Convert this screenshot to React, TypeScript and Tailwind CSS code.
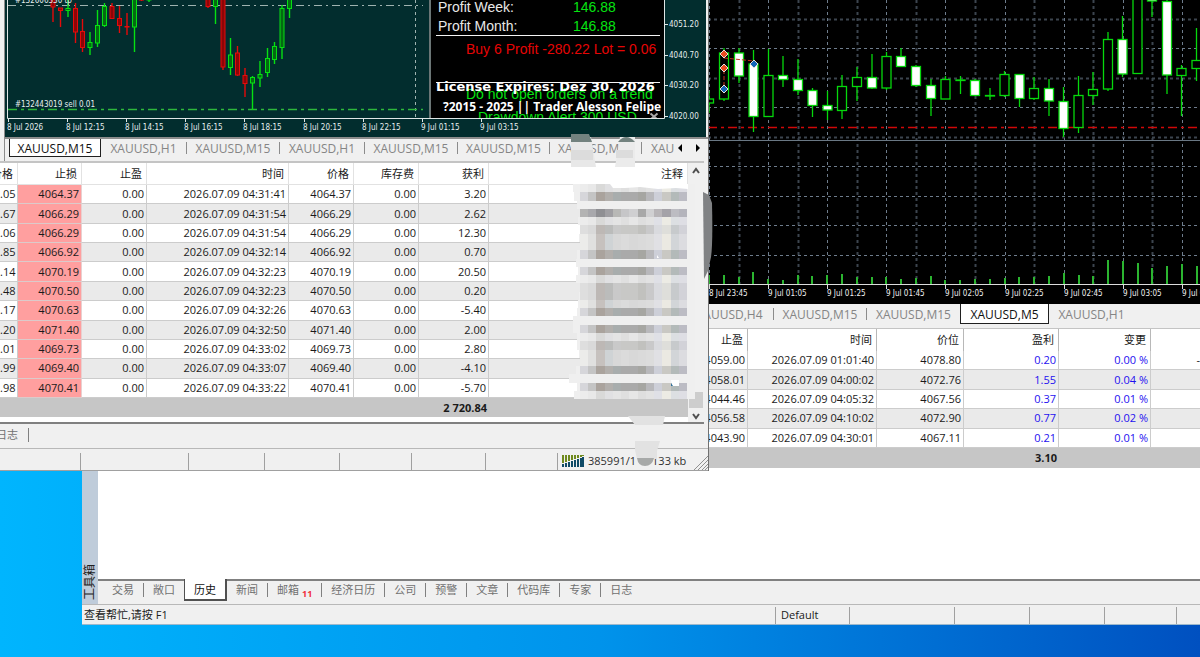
import React from "react";

type Candle = [x: number, high: number, low: number, top: number, bottom: number, up: boolean];

const leftCandles: Candle[] = [
  [53, -5, 22, -5, 7, false],
  [60.5, 8, 27, 8, 10.5, false],
  [68, -2, 17, 8.5, 10.5, true],
  [75.5, 3, 43, 8.5, 32, false],
  [82.5, 19, 52, 31.5, 47.5, false],
  [90, 32, 55, 42.5, 47.5, true],
  [97.5, 10, 47, 25.5, 43, true],
  [104.5, 3, 27, 6.5, 25.5, true],
  [112, 3, 19, 6.5, 18.5, false],
  [119.5, 6, 33, 18.5, 25.5, false],
  [127, 13, 35, 26.5, 27, false],
  [134.5, -5, 52, -5, 27, true],
  [141.5, -5, 1, -5, 0, false],
  [149, -5, 2, -5, 0, true],
  [208, -5, 8, -5, 6.5, false],
  [215.5, -5, 24, -5, 6.5, true],
  [223, -5, 70, -5, 67, false],
  [230.5, 38, 75, 55, 67.5, true],
  [237.5, 46, 76, 53, 75, false],
  [245, 68, 97, 75.5, 83.5, false],
  [252.5, 76, 110, 77.5, 83, true],
  [260, 61, 87, 74.5, 78, true],
  [267.5, 48, 77, 58.5, 72.5, true],
  [274.5, 42, 64, 46.5, 59.5, true],
  [282, 5, 59, 8.5, 47.5, true],
  [289.5, -5, 18, -5, 8.5, true],
];

// `up` candles are hollow, the others are filled white.
const rightCandles: Candle[] = [
  [709, 91, 113, 99, 103, true],
  [724, 48, 101, 53, 99, true],
  [739, 48, 83, 53, 76, false],
  [753.5, 50, 132, 64, 116.5, false],
  [768.5, 49, 117, 75.5, 116.5, true],
  [783, 56, 87, 75.5, 79.5, false],
  [798, 59, 95, 79.5, 90.5, false],
  [812.5, 88, 117, 90.5, 105.5, false],
  [827.5, 91, 120, 105.5, 110, false],
  [842, 75, 119, 86.5, 110.5, true],
  [857, 67, 101, 77.5, 86.5, true],
  [872, 54, 89, 77.5, 88, false],
  [886.5, 52, 90, 56.5, 88, true],
  [901, 48, 67, 56.5, 66.5, false],
  [916, 65, 87, 66.5, 85.5, false],
  [931, 79, 116, 85.5, 98.5, false],
  [945.5, 76, 99, 79.5, 99, true],
  [960.5, 76, 94, 80, 80.5, true],
  [975, 79, 96, 80.5, 95.5, false],
  [990, 88, 100, 95.5, 96, true],
  [1004.5, 71, 97, 74.5, 95.5, true],
  [1019.5, 74, 107, 74.5, 98.5, false],
  [1034, 77, 100, 88.5, 98.5, true],
  [1049, 79, 116, 88.5, 101, false],
  [1063.5, 87, 137, 101.5, 128.5, false],
  [1078.5, 76, 133, 95.5, 127.5, true],
  [1093, 72, 105, 89.5, 95.5, true],
  [1108, 32, 91, 39.5, 89, true],
  [1122.5, 16, 77, 39.5, 74, false],
  [1137.5, -5, 74, -5, 73.5, true],
  [1152, -5, 17, -5, 1, false],
  [1167, -5, 94, 1.5, 75, false],
  [1181.5, 65, 116, 68.5, 75.5, true],
  [1196.5, 28, 81, 60.5, 68.5, true],
];

const volumes = [
  9, 9, 7, 12, 5, 4, 9, 8, 9, 10, 7, 7, 7, 5, 6, 8, 4, 4, 5, 5, 6, 7, 7, 8, 11, 9, 8, 24, 23, 21, 16, 18, 20, 18,
];

const leftTimes = ["8 Jul 2026", "8 Jul 12:15", "8 Jul 14:15", "8 Jul 16:15", "8 Jul 18:15", "8 Jul 20:15", "8 Jul 22:15", "9 Jul 01:15", "9 Jul 03:15"];
const rightTimes = ["8 Jul 23:45", "9 Jul 01:05", "9 Jul 01:25", "9 Jul 01:45", "9 Jul 02:05", "9 Jul 02:25", "9 Jul 02:45", "9 Jul 03:05", "9 Jul 03:25"];
const prices = ["4051.20", "4040.70", "4030.20", "4020.00"];

const leftRows = [
  [".05", "4064.37", "0.00", "2026.07.09 04:31:41", "4064.37", "0.00", "3.20"],
  [".67", "4066.29", "0.00", "2026.07.09 04:31:54", "4066.29", "0.00", "2.62"],
  [".06", "4066.29", "0.00", "2026.07.09 04:31:54", "4066.29", "0.00", "12.30"],
  [".85", "4066.92", "0.00", "2026.07.09 04:32:14", "4066.92", "0.00", "0.70"],
  [".14", "4070.19", "0.00", "2026.07.09 04:32:23", "4070.19", "0.00", "20.50"],
  [".48", "4070.50", "0.00", "2026.07.09 04:32:23", "4070.50", "0.00", "0.20"],
  [".17", "4070.63", "0.00", "2026.07.09 04:32:26", "4070.63", "0.00", "-5.40"],
  [".20", "4071.40", "0.00", "2026.07.09 04:32:50", "4071.40", "0.00", "2.00"],
  [".01", "4069.73", "0.00", "2026.07.09 04:33:02", "4069.73", "0.00", "2.80"],
  [".99", "4069.40", "0.00", "2026.07.09 04:33:07", "4069.40", "0.00", "-4.10"],
  [".98", "4070.41", "0.00", "2026.07.09 04:33:22", "4070.41", "0.00", "-5.70"],
];

const rightRows = [
  ["4059.00", "2026.07.09 01:01:40", "4078.80", "0.20", "0.00 %"],
  ["4058.01", "2026.07.09 04:00:02", "4072.76", "1.55", "0.04 %"],
  ["4044.46", "2026.07.09 04:05:32", "4067.56", "0.37", "0.01 %"],
  ["4056.58", "2026.07.09 04:10:02", "4072.90", "0.77", "0.02 %"],
  ["4043.90", "2026.07.09 04:30:01", "4067.11", "0.21", "0.01 %"],
];

const axisFont = "text-[8px] font-['DejaVu_Sans_Condensed','DejaVu_Sans',sans-serif]";

function AccountChart() {
  return (
    <svg className="block h-[137px] w-full bg-[#022d2e]" role="img" aria-label="XAUUSD,M15">
      <rect x="0" y="0" width="4" height="137" fill="#f0f0f0" />
      <rect x="4" y="0" width="1" height="137" fill="#8c8c8c" />
      <g stroke="#9fb3b0" fill="none">
        <path d="M8 5.5H423" strokeDasharray="8 4 2 4" />
        <path d="M415.5 0V118" strokeDasharray="3 3" />
      </g>
      <path d="M8 109.5H423" stroke="#2fb83c" strokeWidth="1.4" strokeDasharray="9 4 3 4" />
      {leftCandles.map(([x, high, low, top, bottom, up]) => (
        <g key={x} stroke={up ? "#06e012" : "#e60a0a"}>
          <path d={`M${x} ${high}V${low}`} strokeWidth="1.4" />
          <rect x={x - 2} y={top} width="4" height={bottom - top} fill={up ? "#046a12" : "#8c0507"} />
        </g>
      ))}
      <rect x="429" y="0" width="2" height="118" fill="#6b7676" />
      <rect x="431" y="0" width="233" height="118" fill="#000" />
      <svg x="0" y="0" width="664" height="118">
        <g fill="#e8e8e8" className="text-[14px] font-['Liberation_Sans',sans-serif]">
          <text x="438" y="12">Profit Week:</text>
          <text x="438" y="31">Profit Month:</text>
          <g fill="#06e312">
            <text x="573" y="12">146.88</text>
            <text x="573" y="31">146.88</text>
            <text x="466" y="99">Do not open orders on a trend</text>
            <text x="478" y="122">Drawdown Alert 300 USD</text>
          </g>
          <text x="466" y="54" fill="#e60505">Buy 6 Profit -280.22 Lot = 0.06</text>
        </g>
        <path d="M436 35.5H660M436 82.5H660" stroke="#f4f4f4" />
        <g fill="#fff" className="font-bold">
          <text x="436" y="91" className="text-[13px] font-['DejaVu_Sans',sans-serif]">License Expires: Dez 30, 2026</text>
          <text x="443" y="111" className="text-xs font-['Open_Sans',sans-serif]">?2015 - 2025 || Trader Alesson Felipe</text>
        </g>
        <path d="M650.5 113.5l7 6M657.5 113.5l-7 6" stroke="#a8a8a8" strokeWidth="2" />
      </svg>
      <path d="M7.5 0V118.5H664.5V0" fill="none" stroke="#dfe6e6" />
      <g fill="#e6eeee" className={axisFont}>
        <text x="15" y="3">#132606330 tp</text>
        <text x="15" y="107">#132443019 sell 0.01</text>
        {prices.map((price, i) => (
          <g key={price}>
            <path d={`M665 ${24.5 + Math.round(i * 30.5)}h3`} stroke="#dfe6e6" />
            <text x="669" y={27 + Math.round(i * 30.5)}>{price}</text>
          </g>
        ))}
        {leftTimes.map((time, i) => (
          <g key={time}>
            <path d={`M${8.5 + Math.round(i * 59.1)} 119v3`} stroke="#dfe6e6" />
            <text x={7 + Math.round(i * 59.1)} y="130">{time}</text>
          </g>
        ))}
      </g>
    </svg>
  );
}

function Marker({ x, y, color }: { x: number; y: number; color: string }) {
  return <path d={`M${x} ${y - 4}l4 4l-4 4l-4 -4z`} fill={color} stroke="#e8ddd8" strokeWidth="1" />;
}

function MarketChart() {
  const columns = Array.from({ length: 17 }, (_, i) => Math.round(709 + i * 29.56));
  const lines = [19, 48, 78, 107, 137, 166, 196, 225, 255];
  return (
    <svg className="block h-[304px] w-full bg-black" role="img" aria-label="XAUUSD,M5">
      <g transform="translate(-82 0)">
        {lines.map((y, i) => (
          <path
            key={y}
            d={`M708 ${y + 0.5}H1200`}
            stroke={i % 2 || i > 5 ? "#6e7c8c" : "#3c454f"}
            strokeWidth={i % 2 || i > 5 ? 1 : 2}
            strokeDasharray="3 3"
          />
        ))}
        {columns.map((x, i) => (
          <path
            key={x}
            d={`M${x + 0.5} 0V284`}
            stroke={i % 2 ? "#3c454f" : "#6e7c8c"}
            strokeWidth={i % 2 ? 2 : 1}
            strokeDasharray="3 3"
          />
        ))}
        <path d="M708 127.5H1200" stroke="#d00808" strokeWidth="1.4" strokeDasharray="9 4 3 4" />
        <path d="M708 140.5H1200" stroke="#6a7884" />
        {rightCandles.map(([x, high, low, top, bottom, up]) => (
          <g key={x} stroke="#06d80c">
            <path d={`M${x} ${high}V${low}`} strokeWidth="1.3" />
            <rect x={x - 4.5} y={top} width="9" height={bottom - top} fill={up ? "#000" : "#fff"} strokeWidth="1.3" />
          </g>
        ))}
        <path d="M724 58L754 61M724 70V88" stroke="#c2341c" strokeDasharray="4 2" />
        <Marker x={724} y={54} color="#ea4a1f" />
        <Marker x={724} y={68} color="#ea4a1f" />
        <Marker x={724} y={89} color="#1565b8" />
        <Marker x={754} y={64} color="#1565b8" />
        {volumes.map((height, i) => (
          <rect key={i} x={Math.round(708 + i * 14.78)} y={284 - height} width="2" height={height} fill="#2bb530" />
        ))}
        <path d="M708 284.5H1200" stroke="#dcdcdc" />
        <g fill="#f0f0f0" className={axisFont}>
          {rightTimes.map((time, i) => (
            <g key={time}>
              <path d={`M${709.5 + Math.round(i * 59.1)} 285v4`} stroke="#dcdcdc" />
              <text x={709 + Math.round(i * 59.1)} y="296">{time}</text>
            </g>
          ))}
        </g>
      </g>
    </svg>
  );
}

const darkA = ["#d6d6da", "#c4c4c4", "#aaa39d", "#b2afac", "#a8adad", "#aaaaaa", "#aaaaaa", "#a6a6a2", "#b8b8bb", "#cdcfd8", "#c9c8c3", "#b3bab9", "#bcbcc4"];
const darkB = ["#b3b3b3", "#a8a8ac", "#8f8f93", "#a09fa3", "#b8b8b6", "#c6c6c8", "#cfcfd1", "#a8a8a8", "#d0d0d2", "#b8b5b8", "#a4a2a8", "#bcbcc2", "#b4b4bc"];
const midA = ["#dedede", "#d9d9d9", "#bdb8b5", "#bbbcbb", "#c9c9c9", "#c8c8c6", "#c8c8c6", "#c1c1be", "#c9c9ca", "#d9dade", "#dededa", "#c7cacc", "#d2d2d8"];
const midB = ["#ececea", "#e0e0df", "#c6c1be", "#cfd3d5", "#d8d8d8", "#dbdbdb", "#d8d8d8", "#dadada", "#dcdcdc", "#e0e0e4", "#ebe9e2", "#d2d5d8", "#dcdce0"];
const paleA = ["#ececec", "#e8e8e8", "#d9d9d8", "#e0e0e2", "#e4e4e4", "#dfdfdf", "#e6e6e6", "#dedede", "#e2e2e2", "#dfe0e6", "#ecebe4", "#dcdfe2", "#dedee4"];
const plain = Array<string>(13).fill("#efefef");

const mosaic = [
  paleA, darkA, plain, darkB, paleA, midA, midB, midB, darkA, plain, darkA, paleA, midA,
  midA, midB, darkA, plain, darkA, paleA, midA, midB, midB, darkA, plain, darkA, paleA,
];
const edges = [573, 574, 577, 580, 578, 580, 579, 580, 577, 576, 578, 576, 580, 579, 578, 577, 573, 573, 577, 577, 579, 580, 576, 569, 577, 574];

function Redaction() {
  return (
    <svg className="pointer-events-none absolute top-0 left-0 h-[471px] w-[720px]" aria-hidden="true">
      {mosaic.map((colors, row) => {
        const y = Math.round(184 + row * 8.28);
        const height = Math.round(184 + (row + 1) * 8.28) - y;
        return (
          <g key={row}>
            <rect x={edges[row]} y={y} width={695 - edges[row]} height={height} fill="#efefef" />
            {colors.map((color, i) => {
              const x = Math.round(580 + i * 8.23);
              return <rect key={i} x={x} y={y} width={Math.round(580 + (i + 1) * 8.23) - x} height={height} fill={color} />;
            })}
          </g>
        );
      })}
      <path d="M610 184l3 4h12l15 -1l18 2l18 -1l12 1v-5z" fill="#fff" />
      <path d="M657 255l2 3h-2zM671 380h8v6h-7z" fill="#fff" />
      <path d="M671 383l2 3h-2z" fill="#2f6f9a" />
      <path d="M571 137h20l5 30h-25z" fill="#e8e8e8" />
      <path d="M571 134h18l3 8h-21z" fill="#73827f" />
      <path d="M620 137h15v30h-20z" fill="#ebebeb" />
      <path d="M618 142q8 -10 17 0z" fill="#73827f" />
      <path d="M571 150h22v10h-22zM616 150h17v8h-17z" fill="#dcdcdc" />
      <path d="M703 192l6 3l3 8q1 40 -1 54l-3 14l-4 8z" fill="#808284" />
      <path d="M628 416h37l-2 9h-28z" fill="#e2e2e2" />
      <path d="M635 441h25l-3 10v8h-20l-2 -9z" fill="#e2e2e2" />
      <path d="M637 458h17q-2 8 -9 8q-7 0 -8 -8z" fill="#a7a9a8" />
    </svg>
  );
}

function ChartTab({ label, className = "", active = false }: { label: string; className?: string; active?: boolean }) {
  return (
    <button
      type="button"
      className={`h-full shrink-0 overflow-hidden whitespace-nowrap pt-0.5 text-xs leading-4 ${active ? "border border-t-0 border-[#202020] bg-white text-[#111]" : "text-[#858585]"} ${className}`}
    >
      {label}
    </button>
  );
}

const Divider = () => <span className="h-3 w-px shrink-0 bg-[#8c8c8c]" />;

const leftHead = ["价格", "止损", "止盈", "时间", "价格", "库存费", "获利", "注释"];
const rightHead = ["止盈", "时间", "价位", "盈利", "变更"];

function AccountWindow() {
  return (
    <section className="absolute top-0 left-0 w-[709px] border-r border-[#707070] bg-[#f0f0f0]">
      <div className="pr-0.5">
        <AccountChart />
      </div>
      <nav className="ml-1 flex h-6 items-start border-t-2 border-l border-[#8c8c8c] pr-1 pb-1 pl-1">
        <ChartTab label="XAUUSD,M15" active className="w-[92px]" />
        <div className="flex h-full items-center">
          <ChartTab label="XAUUSD,H1" className="w-[85px]" />
          <Divider />
          <ChartTab label="XAUUSD,M15" className="w-[92px]" />
          <Divider />
          <ChartTab label="XAUUSD,H1" className="w-[84px]" />
          <Divider />
          <ChartTab label="XAUUSD,M15" className="w-[92px]" />
          <Divider />
          <ChartTab label="XAUUSD,M15" className="w-[91px]" />
          <Divider />
          <ChartTab label="XAUUSD,M15" className="w-[91px]" />
          <Divider />
          <ChartTab label="XAUUSD,M15" className="w-[32px] pl-[9px]" />
        </div>
        <div className="flex h-full flex-1 items-center justify-between px-0.5">
          <button type="button" aria-label="←">
            <svg className="block size-2" viewBox="0 0 8 8"><path d="M6 0v8L2 4z" /></svg>
          </button>
          <button type="button" aria-label="→">
            <svg className="block size-2" viewBox="0 0 8 8"><path d="M2 0v8l4-4z" /></svg>
          </button>
        </div>
      </nav>
      <div className="mr-1 flex border-t-2 border-b-2 border-t-[#c4c4c4] border-b-[#808080] bg-white">
        <div className="flex-1 pb-[5px]">
          <table className="h-[254px] w-full table-fixed border-separate border-spacing-0 text-right text-[11px] leading-4 text-[#1a1a1a]">
            <colgroup>
              <col className="w-[18px]" />
              <col className="w-[64px]" />
              <col className="w-[65px]" />
              <col className="w-[142px]" />
              <col className="w-[65px]" />
              <col className="w-[65px]" />
              <col className="w-[70px]" />
              <col />
            </colgroup>
            <thead>
              <tr className="h-[22px]">
                {leftHead.map((title, i) => (
                  <th key={i} className="overflow-hidden border-r border-b border-[#e2e2e2] p-0 pr-1 font-normal whitespace-nowrap">
                    <span className="flex justify-end">{title}</span>
                  </th>
                ))}
              </tr>
            </thead>
            <tbody>
              {leftRows.map((row, r) => (
                <tr key={r} className="even:bg-[#eaeaea]">
                  {row.map((value, c) => (
                    <td
                      key={c}
                      className={`border-r border-b p-0 whitespace-nowrap ${c === 1 ? "border-r-[#e8d0d0] border-b-[#dccaca] bg-[#ff9f9f] pr-0.5" : "border-[#cccccc] pr-0.5"}`}
                    >
                      {value}
                    </td>
                  ))}
                  <td className="border-b border-[#cccccc] p-0" />
                </tr>
              ))}
            </tbody>
            <tfoot>
              <tr className="h-[19px] bg-[#c6c6c6] font-bold">
                <td colSpan={7} className="h-[19px] p-0 pr-0.5">2 720.84</td>
                <td className="h-[19px] p-0" />
              </tr>
            </tfoot>
          </table>
        </div>
        <div className="flex w-4 flex-col items-center bg-[#f0f0f0] pt-1 pb-0.5">
          <svg className="h-2 w-2" viewBox="0 0 8 8" fill="none" stroke="#505050" strokeWidth="2"><path d="M1 6l3-4l3 4" /></svg>
          <div className="mt-auto mb-1 h-4 w-3.5 bg-[#cdcdcd]" />
          <svg className="h-2 w-2" viewBox="0 0 8 8" fill="none" stroke="#505050" strokeWidth="2"><path d="M1 2l3 4l3-4" /></svg>
        </div>
      </div>
      <div className="flex h-6 items-center overflow-hidden pb-0.5 text-[11px] leading-4 text-[#707070]">
        <button type="button" className="-ml-1 pr-2.5">日志</button>
        <span className="h-3.5 w-px bg-[#808080]" />
      </div>
      <footer className="flex h-[23px] items-end border-t border-b border-t-[#b8b8b8] border-b-[#a0a0a0] text-xs leading-4">
        <span className="h-[17px] w-[81px] border-r border-[#a0a0a0]" />
        <span className="h-[17px] w-[108px] border-r border-[#a0a0a0]" />
        <span className="h-[17px] w-[76px] border-r border-[#a0a0a0]" />
        <span className="h-[17px] w-[75px] border-r border-[#a0a0a0]" />
        <span className="h-[17px] w-[72px] border-r border-[#a0a0a0]" />
        <span className="h-[17px] w-[74px] border-r border-[#a0a0a0]" />
        <span className="h-[17px] w-[72px] border-r border-[#a0a0a0]" />
        <span className="flex h-[18px] flex-1 items-center gap-1 pl-1 text-[11px] text-[#303030]">
          <svg className="h-3 w-[22px]" viewBox="0 0 22 12">
            {[0, 3, 6, 9, 12, 15, 18, 20].map((x, i) => (
              <g key={x}>
                <rect x={x} y="0" width="2" height={8 - i} fill="#6f8a1e" />
                <rect x={x} y={9 - i} width="2" height={3 + i} fill="#0f4a66" />
              </g>
            ))}
          </svg>
          <span className="whitespace-nowrap">385991/1</span>
          <span className="ml-3 whitespace-nowrap">133 kb</span>
        </span>
        <svg className="h-3.5 w-3.5" viewBox="0 0 14 14" stroke="#909090"><path d="M0 14L14 0M4 14L14 4M8 14l6-6M11 14l3-3" /></svg>
      </footer>
      <Redaction />
    </section>
  );
}

const toolboxTabs = ["交易", "敞口", "历史", "新闻", "邮箱", "经济日历", "公司", "预警", "文章", "代码库", "专家", "日志"];

function MarketWindow() {
  return (
    <section className="absolute top-0 right-0 left-[82px] border-b border-[#9db8cc] bg-[#f0f0f0]">
      <MarketChart />
      <nav className="flex h-6 items-start overflow-hidden pb-1 pl-[604px]">
        <div className="flex h-full items-center">
          <ChartTab label="XAUUSD,H4" className="w-[87px]" />
          <Divider />
          <ChartTab label="XAUUSD,M15" className="w-[92px]" />
          <Divider />
          <ChartTab label="XAUUSD,M15" className="w-[93px]" />
        </div>
        <ChartTab label="XAUUSD,M5" active className="w-[89px]" />
        <div className="flex h-full items-center">
          <ChartTab label="XAUUSD,H1" className="w-[85px]" />
        </div>
      </nav>
      <div className="flex border-b border-[#b8b8b8]">
        <div className="flex w-4 items-end justify-center bg-[#bfccda] pb-1 text-xs leading-4 text-[#202020]">
          <span className="rotate-180 [text-orientation:sideways] [writing-mode:vertical-rl]">工具箱</span>
        </div>
        <div className="min-w-0 flex-1">
          <div className="h-[253px] border-t border-b-2 border-t-[#c4c4c4] border-b-[#808080] bg-white">
            <table className="h-[139px] w-full table-fixed border-separate border-spacing-0 text-right text-[11px] leading-4 text-[#1a1a1a]">
              <colgroup>
                <col className="w-[650px]" />
                <col className="w-[129px]" />
                <col className="w-[87px]" />
                <col className="w-[95px]" />
                <col className="w-[92px]" />
                <col />
              </colgroup>
              <thead>
                <tr className="h-[22px]">
                  {rightHead.map((title) => (
                    <th key={title} className="border-r border-[#b8b8b8] p-0 pr-1 font-normal">{title}</th>
                  ))}
                  <th className="p-0" />
                </tr>
              </thead>
              <tbody>
                {rightRows.map((row, r) => (
                  <tr key={r} className="even:bg-[#eaeaea]">
                    {row.map((value, c) => (
                      <td key={c} className={`border-r border-b border-[#cccccc] p-0 pr-0.5 whitespace-nowrap ${c > 2 ? "text-[#1e10f0]" : ""}`}>
                        {value}
                      </td>
                    ))}
                    <td className="border-b border-[#cccccc] p-0">{r === 0 ? "-" : ""}</td>
                  </tr>
                ))}
              </tbody>
              <tfoot>
                <tr className="h-5 bg-[#c6c6c6] font-bold">
                  <td colSpan={4} className="h-5 p-0 pr-0.5">3.10</td>
                  <td colSpan={2} className="h-5 p-0" />
                </tr>
              </tfoot>
            </table>
          </div>
          <nav className="flex h-[23px] items-start pl-[5px] text-[11px] leading-4 text-[#707070]">
            {toolboxTabs.map((tab) => {
              const active = tab === "历史";
              const plainEdge = tab === "敞口" || tab === "日志";
              return (
                <button
                  key={tab}
                  type="button"
                  className={
                    active
                      ? "-mt-0.5 h-[22px] shrink-0 border-r-2 border-b-2 border-l border-[#505050] bg-white px-[9px] pt-0.5 text-[#111]"
                      : "flex h-[18px] shrink-0 items-center"
                  }
                >
                  {active ? (
                    tab
                  ) : (
                    <>
                      <span className="flex px-[9px]">
                        {tab}
                        {tab === "邮箱" && <span className="-mb-1 ml-[3px] self-end text-[9px] font-bold text-[#f0303c]">11</span>}
                      </span>
                      {plainEdge ? null : <span className="h-3.5 w-px bg-[#808080]" />}
                    </>
                  )}
                </button>
              );
            })}
          </nav>
        </div>
      </div>
      <footer className="flex h-[19px] items-end text-[11px] leading-4 text-[#202020]">
        <span className="h-[17px] flex-1 border-r border-[#a0a0a0] pl-0.5">查看帮忙,请按 F1</span>
        <span className="h-[17px] w-[74px] border-r border-[#a0a0a0] pl-[5px]">Default</span>
        <span className="h-[17px] w-[105px] border-r border-[#a0a0a0]" />
        <span className="h-[17px] w-[75px] border-r border-[#a0a0a0]" />
        <span className="h-[17px] w-[75px] border-r border-[#a0a0a0]" />
        <span className="h-[17px] w-[72px] border-r border-[#a0a0a0]" />
        <span className="w-[23px]" />
      </footer>
    </section>
  );
}

export default function App() {
  return (
    <main className="relative h-screen overflow-hidden bg-linear-to-r from-[#00b5fe] via-[#0093eb] to-[#0050c0] font-['Open_Sans','Noto_Sans_CJK_SC',sans-serif]">
      <MarketWindow />
      <AccountWindow />
    </main>
  );
}
